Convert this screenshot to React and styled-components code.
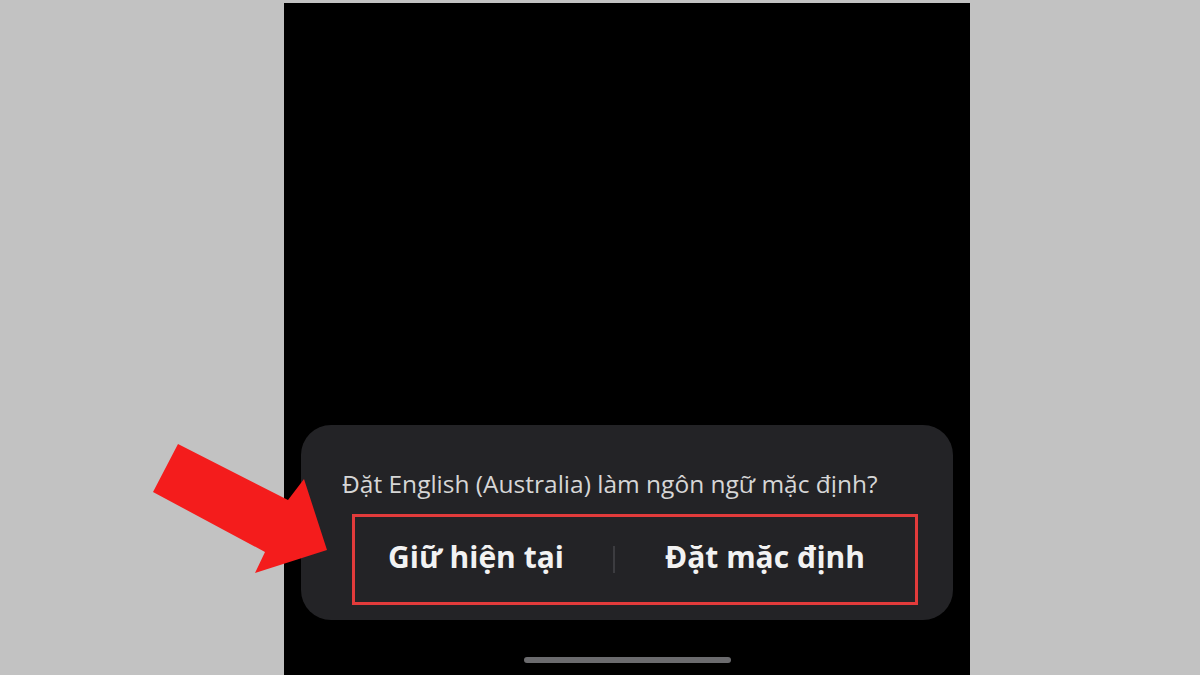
import React from "react"
import styled, { createGlobalStyle } from "styled-components"

const GlobalStyle = createGlobalStyle`
  html, body {
    margin: 0;
    padding: 0;
    background: #c2c2c2;
    font-family: "Open Sans", Roboto, "Noto Sans", sans-serif;
  }
`

const Page = styled.div`
  position: relative;
  width: 1200px;
  height: 675px;
  overflow: hidden;
  display: flex;
  justify-content: center;
  padding-top: 3px;
  box-sizing: border-box;
`

const Phone = styled.div`
  width: 686px;
  height: 672px;
  margin-left: 54px;
  background: #000;
  display: flex;
  flex-direction: column;
  justify-content: flex-end;
  align-items: center;
`

const Dialog = styled.div`
  align-self: stretch;
  margin: 0 17px;
  background: #232326;
  border-radius: 30px;
  padding: 44px 35px 15px 41px;
`

const Title = styled.div`
  color: #d6d6d6;
  font-size: 24.5px;
  line-height: 30px;
  margin-bottom: 15px;
  white-space: nowrap;
`

const Highlight = styled.div`
  margin-left: 10px;
  height: 91px;
  box-sizing: border-box;
  border: 3px solid #e23b3b;
  display: flex;
  align-items: center;
`

const Action = styled.button`
  flex: ${p => (p.wide ? "1" : "0 0 258px")};
  padding: 0 0 6px;
  padding-right: ${p => (p.wide ? "0" : "16px")};
  height: 100%;
  background: none;
  border: none;
  color: #f2f2f2;
  font-family: inherit;
  font-weight: 700;
  font-size: 30px;
  text-align: center;
`

const Divider = styled.div`
  width: 2px;
  height: 27px;
  background: #3c3c40;
  flex: none;
`

const HomeBar = styled.div`
  width: 207px;
  height: 6px;
  border-radius: 3px;
  background: #6b6b6e;
  margin: 37px 0 12px;
`

const Arrow = styled.svg`
  position: absolute;
  left: 0;
  top: 0;
  pointer-events: none;
`

export default function App() {
  return (
    <>
      <GlobalStyle />
      <Page>
        <Phone>
          <Dialog>
            <Title>Đặt English (Australia) làm ngôn ngữ mặc định?</Title>
            <Highlight>
              <Action>Giữ hiện tại</Action>
              <Divider />
              <Action wide>Đặt mặc định</Action>
            </Highlight>
          </Dialog>
          <HomeBar />
        </Phone>
        <Arrow width="1200" height="675" viewBox="0 0 1200 675">
          <polygon
            points="178,444 288,500 304,479 327,550 255,573 265,552 153,492"
            fill="#f41c1c"
          />
        </Arrow>
      </Page>
    </>
  )
}
